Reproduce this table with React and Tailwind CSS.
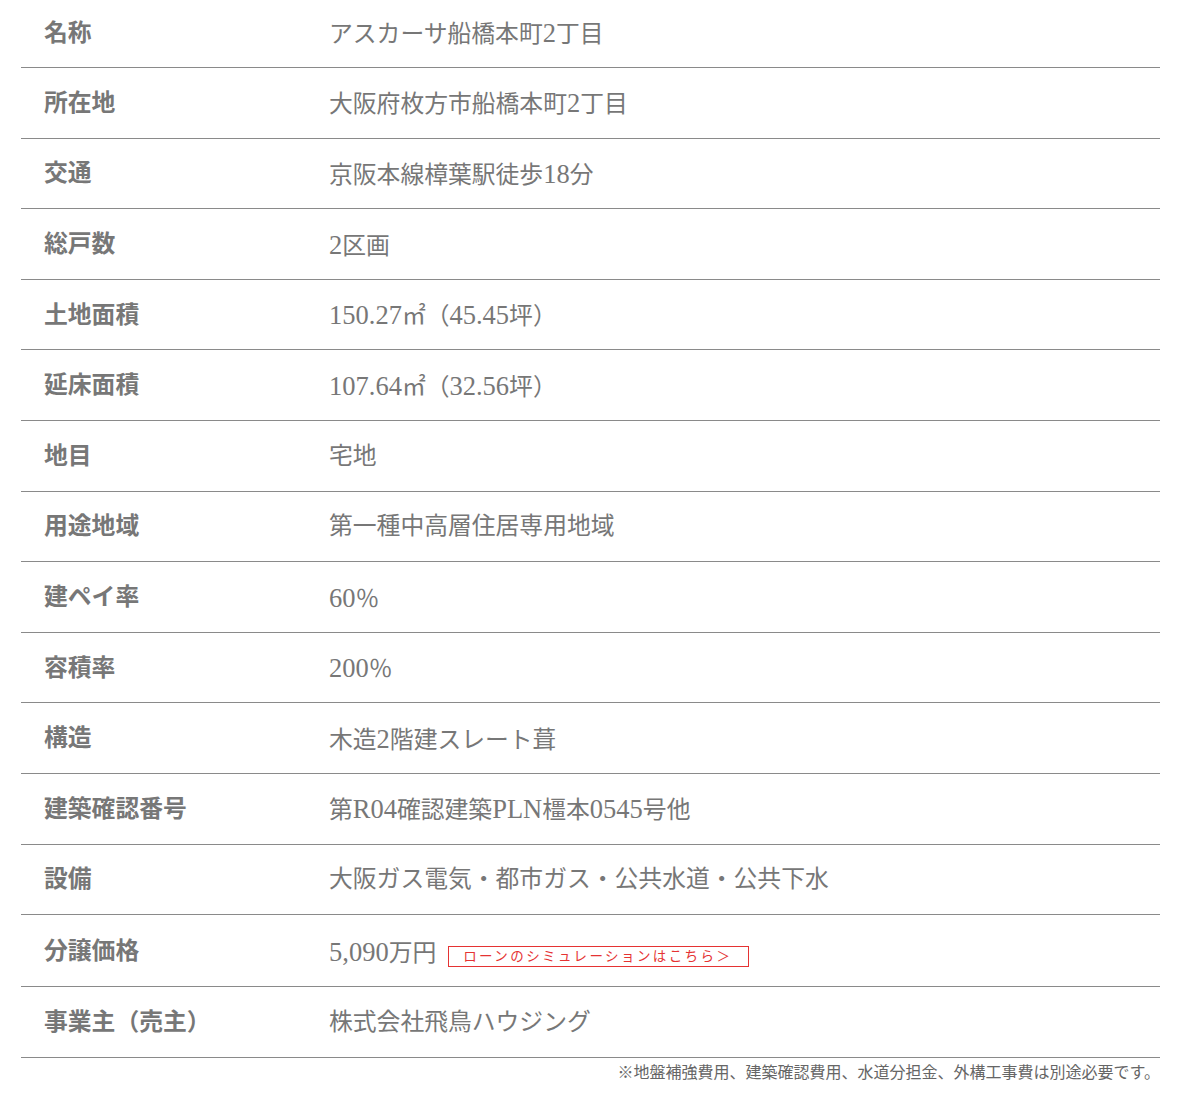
import React from 'react';

const rows = [
  ['名称', 'アスカーサ船橋本町2丁目'],
  ['所在地', '大阪府枚方市船橋本町2丁目'],
  ['交通', '京阪本線樟葉駅徒歩18分'],
  ['総戸数', '2区画'],
  ['土地面積', '150.27㎡（45.45坪）'],
  ['延床面積', '107.64㎡（32.56坪）'],
  ['地目', '宅地'],
  ['用途地域', '第一種中高層住居専用地域'],
  ['建ペイ率', '60％'],
  ['容積率', '200％'],
  ['構造', '木造2階建スレート葺'],
  ['建築確認番号', '第R04確認建築PLN橿本0545号他'],
  ['設備', '大阪ガス電気・都市ガス・公共水道・公共下水'],
  ['分譲価格', '5,090万円', true],
  ['事業主（売主）', '株式会社飛鳥ハウジング'],
];

const font = {
  fontFamily: '"Liberation Serif", "Noto Sans CJK JP", serif',
};

const Value = ({ text }) =>
  text.split(/([0-9A-Za-z.,]+)/).map((part, i) =>
    i % 2 === 1 ? (
      <span key={i} className="text-[26.5px]">
        {part}
      </span>
    ) : (
      part
    )
  );

const App = () => {
  return (
    <div className="w-[1191px] h-[1098px] bg-white overflow-hidden text-[#777]" style={font}>
      <div className="mx-[21px] w-[1139px]">
        {rows.map(([label, value, price], i) => (
          <div
            key={label}
            className={`flex items-center border-b border-[#8a8a8a] ${
              i === 0 ? 'h-[68px]' : price ? 'h-[72px] pt-[3px]' : 'h-[70.6px] pt-[2px]'
            }`}
          >
            <div className="w-[308px] pl-[23px] text-[23.8px] font-bold leading-none">{label}</div>
            <div className="flex items-end text-[23.8px] leading-none">
              <span>
                <Value text={value} />
              </span>
              {price && (
                <span className="ml-[12px] mb-[-1px] border border-[#e53333] text-[#e53333] text-[13.5px] leading-[19px] h-[21px] w-[301px] pl-[14px] tracking-[2.4px]">
                  ローンのシミュレーションはこちら＞
                </span>
              )}
            </div>
          </div>
        ))}
        <div className="text-right pt-[5px] text-[16px] leading-[20px] text-[#666]">
          ※地盤補強費用、建築確認費用、水道分担金、外構工事費は別途必要です。
        </div>
      </div>
    </div>
  );
};

export default App;
